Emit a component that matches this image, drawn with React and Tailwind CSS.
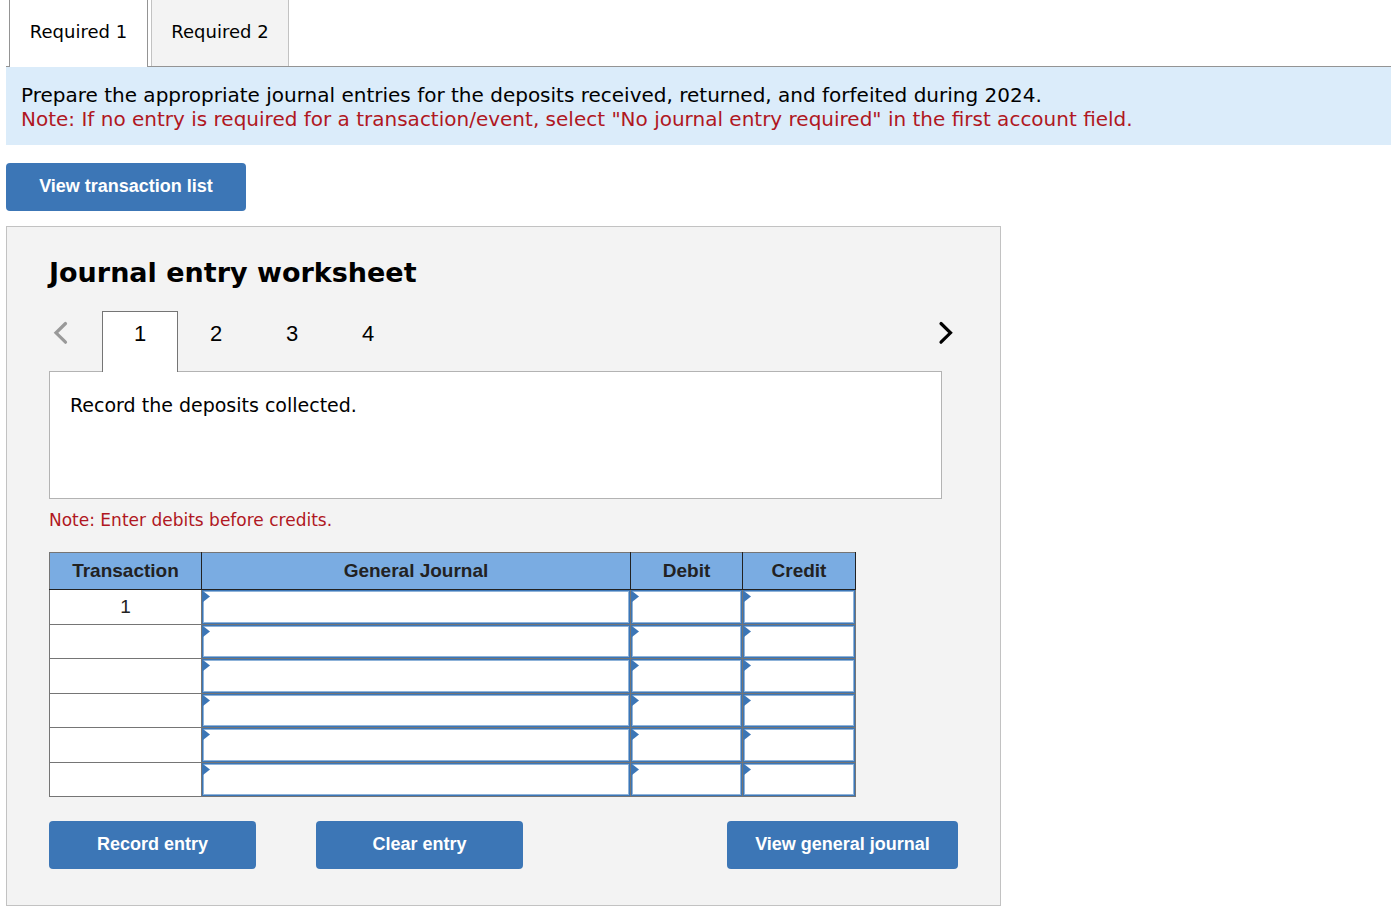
import { useState } from "react";

const sans = "font-['Verdana','DejaVu_Sans',sans-serif]";
const arial = "font-['Liberation_Sans',Arial,sans-serif]";

const tallRow = { row: "h-[35px]", input: "h-[34px]" };
const shortRow = { row: "h-[34px]", input: "h-[33px]" };
const rows = [tallRow, shortRow, tallRow, shortRow, tallRow, shortRow];
const fields = ["General Journal", "Debit", "Credit"];

function Button({ className, children }) {
  return (
    <button
      type="button"
      className={`${arial} h-12 rounded-[4px] bg-[#3c76b6] pb-px text-[18px] font-bold text-white ${className}`}
    >
      {children}
    </button>
  );
}

function Chevron({ direction }) {
  return (
    <svg width="16" height="24" viewBox="0 0 16 24" fill="none" stroke="currentColor" strokeWidth="3.2" strokeLinecap="round" aria-hidden="true">
      <path d={direction === "left" ? "M12.5 2.5L3 11.8L12.5 21.2" : "M3 2.5L12.5 11.8L3 21.2"} />
    </svg>
  );
}

function EntryCell({ label, inputHeight }) {
  return (
    <td className="border border-[#757575] p-0">
      <div className="relative">
        <input
          type="text"
          aria-label={label}
          className={`${arial} ${inputHeight} block w-full border border-[#3c76b6] bg-white px-3 text-[19px] outline-none ring-1 ring-inset ring-[#8fb3d9]`}
        />
        <svg className="absolute left-0 top-0" width="8" height="12" viewBox="0 0 8 12" aria-hidden="true">
          <path d="M1 1L8 6.5L1 12Z" fill="#3c76b6" />
        </svg>
      </div>
    </td>
  );
}

export default function App() {
  const [page, setPage] = useState(1);
  return (
    <main className={`${sans} pb-4 pl-[6px] pr-[5px] text-black`}>
      <div role="tablist" className="flex h-[67px] gap-[3px] border-b border-[#949494] pl-[3px] text-[18px]">
        <button type="button" role="tab" aria-selected="true" className="-mb-px w-[139px] border-x border-[#949494] bg-white pb-[5px]">
          Required 1
        </button>
        <button type="button" role="tab" aria-selected="false" className="w-[138px] border-x border-[#c2c2c2] bg-[#f3f3f3] pb-[4px]">
          Required 2
        </button>
      </div>

      <div className="bg-[#dbecfa] px-[15px] pb-[14px] pt-4 text-[20px] leading-6">
        <p>Prepare the appropriate journal entries for the deposits received, returned, and forfeited during 2024.</p>
        <p className="text-[#b01722]">
          Note: If no entry is required for a transaction/event, select "No journal entry required" in the first account field.
        </p>
      </div>

      <Button className="mt-[18px] w-[240px]">View transaction list</Button>

      <section className="mt-[15px] max-w-[995px] border border-[#c2c2c2] bg-[#f3f3f3] px-[42px] pb-9 pt-7">
        <h1 className="text-[27px] font-bold leading-9">Journal entry worksheet</h1>

        <div className="mt-5 flex h-[60px] items-start">
          <button type="button" disabled aria-label="Previous" className="w-[53px] pl-1 pt-[10px] text-[#999]">
            <Chevron direction="left" />
          </button>
          {[1, 2, 3, 4].map((n) => (
            <button
              key={n}
              type="button"
              onClick={() => setPage(n)}
              className={`${arial} relative h-[61px] w-[76px] border border-b-0 pb-[18px] text-[22px] ${
                n === page ? "border-[#757575] bg-white" : "border-transparent"
              }`}
            >
              {n}
            </button>
          ))}
          <button type="button" aria-label="Next" className="ml-auto pr-1 pt-[10px]">
            <Chevron direction="right" />
          </button>
        </div>

        <div className="mr-4 h-32 border border-[#b3b3b3] bg-white px-5 pt-[21px] text-[19px] leading-6">
          Record the deposits collected.
        </div>
        <p className="mt-[9px] text-[17px] leading-6 text-[#b01722]">Note: Enter debits before credits.</p>

        <table className={`${arial} mt-5 w-[807px] table-fixed border-collapse bg-white text-[19px] text-[#222]`}>
          <colgroup>
            <col className="w-[152px]" />
            <col />
            <col className="w-[112px]" />
            <col className="w-[113px]" />
          </colgroup>
          <thead>
            <tr className="h-[37px] bg-[#7aace2]">
              {["Transaction", ...fields].map((h) => (
                <th key={h} className="border border-[#222] border-t-[#757575] p-0 font-bold first:border-l-[#757575]">
                  {h}
                </th>
              ))}
            </tr>
          </thead>
          <tbody>
            {rows.map(({ row, input }, i) => (
              <tr key={i} className={row}>
                <td className="border border-[#757575] p-0 text-center">{i === 0 ? "1" : ""}</td>
                {fields.map((f) => (
                  <EntryCell key={f} label={`${f}, line ${i + 1}`} inputHeight={input} />
                ))}
              </tr>
            ))}
          </tbody>
        </table>

        <div className="mt-6 flex">
          <Button className="w-[207px]">Record entry</Button>
          <Button className="ml-[60px] w-[207px]">Clear entry</Button>
          <Button className="ml-auto w-[231px]">View general journal</Button>
        </div>
      </section>
    </main>
  );
}
